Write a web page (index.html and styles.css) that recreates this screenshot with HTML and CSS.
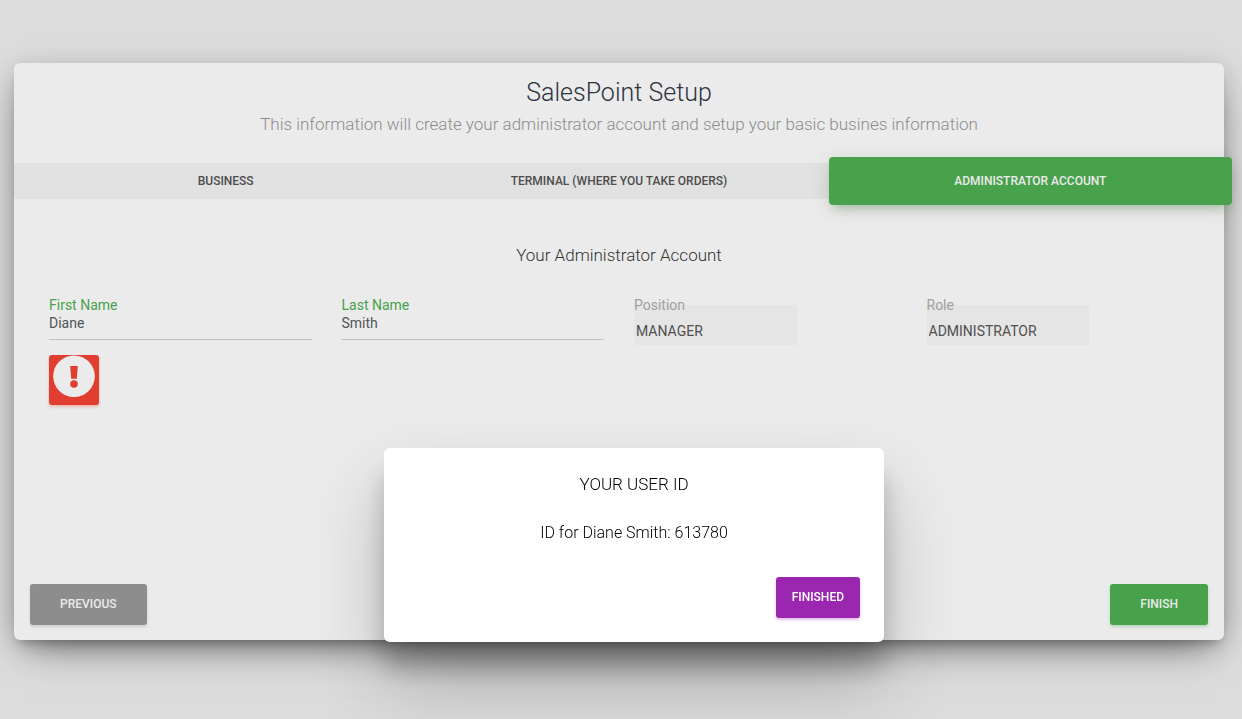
FILE: index.html
```html
<!DOCTYPE html>
<html lang="en">
<head>
<meta charset="utf-8">
<meta name="viewport" content="width=device-width, initial-scale=1">
<title>SalesPoint Setup</title>
<link rel="stylesheet" href="styles.css">
</head>
<body>
<main class="wizard">
  <header class="wizard-header">
    <h1 class="wizard-title">SalesPoint Setup</h1>
    <p class="wizard-subtitle">This information will create your administrator account and setup your basic busines information</p>
  </header>
  <nav class="tabs" aria-label="Setup steps">
    <a class="tab tab-first" href="#business">Business</a>
    <a class="tab" href="#terminal">Terminal (where you take orders)</a>
    <a class="tab tab-active" href="#account" aria-current="step">Administrator Account</a>
  </nav>
  <section class="account" id="account">
    <h2 class="account-title">Your Administrator Account</h2>
    <div class="fields">
      <div class="field">
        <label class="label" for="first">First Name</label>
        <input class="input" id="first" type="text" value="Diane">
      </div>
      <div class="field">
        <label class="label" for="last">Last Name</label>
        <input class="input" id="last" type="text" value="Smith">
      </div>
      <div class="field">
        <label class="label label-muted" for="position">Position</label>
        <select class="select" id="position" disabled><option>MANAGER</option></select>
      </div>
      <div class="field">
        <label class="label label-muted" for="role">Role</label>
        <select class="select" id="role" disabled><option>ADMINISTRATOR</option></select>
      </div>
    </div>
    <button class="alert" type="button" aria-label="Show warning">
      <svg class="alert-icon" viewBox="0 0 50 50" aria-hidden="true">
        <circle cx="25" cy="21.300" r="20.800" fill="#ebebeb"/>
        <path d="M21.200 11h7.600l-1 12.700h-5.600z" fill="#e23d31"/>
        <circle cx="25" cy="29" r="3.800" fill="#e23d31"/>
      </svg>
    </button>
  </section>
  <footer class="wizard-footer">
    <button class="button button-previous" type="button">Previous</button>
    <button class="button button-finish" type="button">Finish</button>
  </footer>
</main>
<dialog class="dialog" open aria-labelledby="dialog-title">
  <h2 class="dialog-title" id="dialog-title">YOUR USER ID</h2>
  <p class="dialog-text">ID for Diane Smith: 613780</p>
  <div class="dialog-actions">
    <button class="button button-finished" type="button">Finished</button>
  </div>
</dialog>
</body>
</html>
```
FILE: styles.css
```css
* {
  box-sizing: border-box;
}

body {
  margin: 0;
  min-height: 100vh;
  display: flex;
  flex-direction: column;
  padding: 63px 18px 79px 14px;
  background: #dcdcdc;
  color: #333;
  font-family: Roboto, "Liberation Sans", sans-serif;
  font-size: 14px;
  line-height: 20px;
}

h1,
h2,
p {
  margin: 0;
  font-weight: 300;
}

button,
input,
select {
  font: inherit;
}

.wizard {
  flex: 1;
  display: flex;
  flex-direction: column;
  border-radius: 6px;
  background: #ebebeb;
  box-shadow: 0 16px 38px -12px rgba(0, 0, 0, .56), 0 4px 25px 0 rgba(0, 0, 0, .12), 0 8px 10px -5px rgba(0, 0, 0, .2);
}

.wizard-header {
  padding: 12px 16px 26px;
  text-align: center;
}

.wizard-title {
  color: #2e3340;
  font-size: 25px;
  line-height: 36px;
}

.wizard-subtitle {
  color: #8b8b8b;
  font-size: 17px;
  line-height: 26px;
}

.tabs {
  display: grid;
  grid-template-columns: repeat(3, 1fr);
  border-radius: 3px;
  background: #e1e1e1;
}

.tab {
  padding: 8px;
  color: #4d4d4d;
  font-size: 12px;
  font-weight: 500;
  text-align: center;
  text-decoration: none;
  text-transform: uppercase;
}

.tab-first {
  padding-left: 28px;
}

.tab-active {
  margin: -6px -8px -6px 8px;
  padding: 14px 8px;
  border-radius: 4px;
  background: #48a14b;
  color: #ebebeb;
  box-shadow: 0 4px 20px 0 rgba(0, 0, 0, .12), 0 7px 10px -5px rgba(72, 161, 75, .4);
}

.account {
  padding: 44px 35px 0;
}

.account-title {
  font-size: 17px;
  line-height: 24px;
  text-align: center;
}

.fields {
  display: grid;
  grid-template-columns: repeat(4, 1fr);
  gap: 30px;
  margin-top: 28px;
}

.field {
  display: flex;
  flex-direction: column;
  align-items: flex-start;
}

.label {
  position: relative;
  z-index: 1;
  height: 10px;
  color: #48a14b;
}

.label-muted {
  color: #a0a0a0;
}

.input {
  width: 100%;
  height: 35px;
  padding: 2px 0 0;
  border: 0;
  border-bottom: 1px solid #c0c0c0;
  background: transparent;
  color: #51555b;
}

.select {
  width: 62%;
  height: 40px;
  padding: 12px 2px 0;
  border: 0;
  border-radius: 0;
  appearance: none;
  background: #e5e5e5;
  color: #505050;
  opacity: 1;
}

.alert {
  display: block;
  width: 50px;
  height: 50px;
  margin-top: 10px;
  padding: 0;
  border: 0;
  border-radius: 3px;
  background: #e23d31;
  box-shadow: 0 2px 3px rgba(226, 61, 49, .3);
}

.alert-icon {
  display: block;
  width: 50px;
  height: 50px;
}

.wizard-footer {
  display: flex;
  justify-content: space-between;
  margin-top: auto;
  padding: 16px 16px 15px;
}

.button {
  padding: 10px 30px 11px;
  border: 0;
  border-radius: 3px;
  color: #ebebeb;
  font-size: 12px;
  font-weight: 500;
  line-height: 20px;
  text-transform: uppercase;
}

.button-previous {
  background: #8d8d8d;
  box-shadow: 0 2px 3px rgba(0, 0, 0, .12);
}

.button-finish {
  background: #48a14b;
  box-shadow: 0 2px 3px rgba(72, 161, 75, .3);
}

.button-finished {
  padding: 10px 16px 11px;
  background: #9b27b0;
  color: #fff;
  box-shadow: 0 2px 3px rgba(155, 39, 176, .3);
}

.dialog {
  position: fixed;
  inset: auto 0 77px 26px;
  width: 500px;
  max-width: calc(100% - 32px);
  margin: 0 auto;
  padding: 24px;
  border: 0;
  border-radius: 6px;
  background: #fff;
  color: #000;
  text-align: center;
  box-shadow: 0 27px 24px 0 rgba(0, 0, 0, .2), 0 40px 77px 0 rgba(0, 0, 0, .22);
}

.dialog-title,
.dialog-text {
  font-size: 17px;
  line-height: 24px;
}

.dialog-text {
  margin-top: 24px;
  font-size: 16px;
  line-height: 26px;
}

.dialog-actions {
  display: flex;
  justify-content: flex-end;
  margin-top: 31px;
}
```
